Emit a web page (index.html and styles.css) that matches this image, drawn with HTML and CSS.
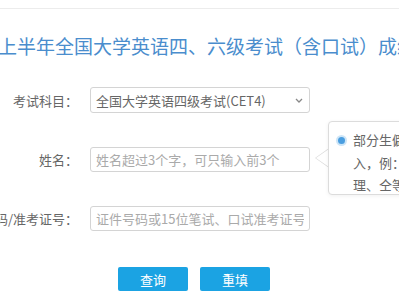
FILE: index.html
```html
<!DOCTYPE html>
<html lang="zh-CN">
<head>
<meta charset="utf-8">
<title>成绩查询</title>
<link rel="stylesheet" href="styles.css">
</head>
<body>
<div class="page">
  <div class="topline"></div>
  <h1 class="title">上半年全国大学英语四、六级考试（含口试）成绩查询</h1>
  <form class="form">
    <div class="row">
      <div class="label"><span>考试科目：</span></div>
      <div class="select">
        <span>全国大学英语四级考试(CET4)</span>
        <svg class="chev" width="8" height="5" viewBox="0 0 8 5"><path d="M1 1 L4 4 L7 1" fill="none" stroke="#888" stroke-width="1.3"/></svg>
      </div>
    </div>
    <div class="row">
      <div class="label"><span>姓名：</span></div>
      <input class="input" type="text" placeholder="姓名超过3个字，可只输入前3个">
    </div>
    <div class="row">
      <div class="label"><span>证件号码/准考证号：</span></div>
      <input class="input" type="text" placeholder="证件号码或15位笔试、口试准考证号">
    </div>
    <div class="buttons">
      <button type="button" class="btn">查询</button>
      <button type="button" class="btn">重填</button>
    </div>
  </form>
  <div class="tip">
    <div class="tip-arrow"></div>
    <div class="tip-body">
      <span class="dot"></span>
      <div class="tip-line">部分生僻字可以用拼音代替输</div>
      <div class="tip-line">入，例：“王珺”可输入“王JUN”，</div>
      <div class="tip-line">理、仝等。</div>
    </div>
  </div>
</div>
</body>
</html>
```
FILE: styles.css
```css
html, body {
  margin: 0;
  padding: 0;
  background: #fff;
  overflow: hidden;
}
body {
  font-family: "Noto Sans CJK SC", "Noto Sans", sans-serif;
  width: 399px;
  height: 300px;
}
.page {
  position: relative;
  width: 399px;
  height: 300px;
  overflow: hidden;
}
.topline {
  height: 8px;
  border-bottom: 1px solid #ececec;
}
.title {
  margin: 25px 0 0 -2px;
  font-size: 19px;
  line-height: 24px;
  font-weight: normal;
  color: #4a8dcd;
  white-space: nowrap;
}
.form {
  margin-top: 29px;
  display: flex;
  flex-direction: column;
  gap: 34px;
}
.row {
  display: flex;
  align-items: center;
  gap: 12px;
}
.label {
  width: 78px;
  flex: none;
  display: flex;
  justify-content: flex-end;
  font-size: 13px;
  color: #666;
  white-space: nowrap;
}
.label span { flex: none; }
.select {
  box-sizing: border-box;
  width: 220px;
  height: 26px;
  border: 1px solid #d4d4d4;
  border-radius: 3px;
  display: flex;
  align-items: center;
  justify-content: space-between;
  padding: 0 6px 0 5px;
  font-size: 13px;
  color: #666;
}
.chev { flex: none; }
.input {
  box-sizing: border-box;
  width: 220px;
  height: 25px;
  border: 1px solid #d4d4d4;
  border-radius: 3px;
  padding: 0 5px;
  margin: 0;
  font-family: inherit;
  font-size: 13px;
  color: #666;
  outline: none;
}
.input::placeholder { color: #aaa; }
.buttons {
  display: flex;
  gap: 12px;
  margin-left: 118px;
  margin-top: 2px;
}
.btn {
  width: 70px;
  height: 24px;
  border: none;
  border-radius: 2px;
  background: #1ba3e3;
  color: #fff;
  font-family: inherit;
  font-size: 13px;
  padding: 0;
}
.tip {
  position: absolute;
  left: 315px;
  top: 121px;
  display: flex;
}
.tip-arrow {
  position: relative;
  width: 14px;
  height: 74px;
  flex: none;
}
.tip-arrow::before,
.tip-arrow::after {
  content: "";
  position: absolute;
  top: 27px;
  border-style: solid;
  border-color: transparent;
}
.tip-arrow::before {
  left: 0;
  border-width: 10px 14px 10px 0;
  border-right-color: #dcdcdc;
}
.tip-arrow::after {
  left: 1px;
  top: 28px;
  border-width: 9px 13px 9px 0;
  border-right-color: #fff;
}
.tip-body {
  position: relative;
  box-sizing: border-box;
  margin-left: -1px;
  width: 200px;
  height: 74px;
  border: 1px solid #dcdcdc;
  border-radius: 4px;
  background: #fff;
  box-shadow: 0 1px 4px rgba(0,0,0,0.06);
  padding: 7px 0 0 24px;
  font-size: 13px;
  line-height: 22.5px;
  color: #666;
  white-space: nowrap;
}
.dot {
  position: absolute;
  left: 9px;
  top: 15px;
  width: 7px;
  height: 7px;
  border-radius: 50%;
  background: #4a9ee0;
  box-shadow: 0 0 0 2px #cde5f7;
}
```
